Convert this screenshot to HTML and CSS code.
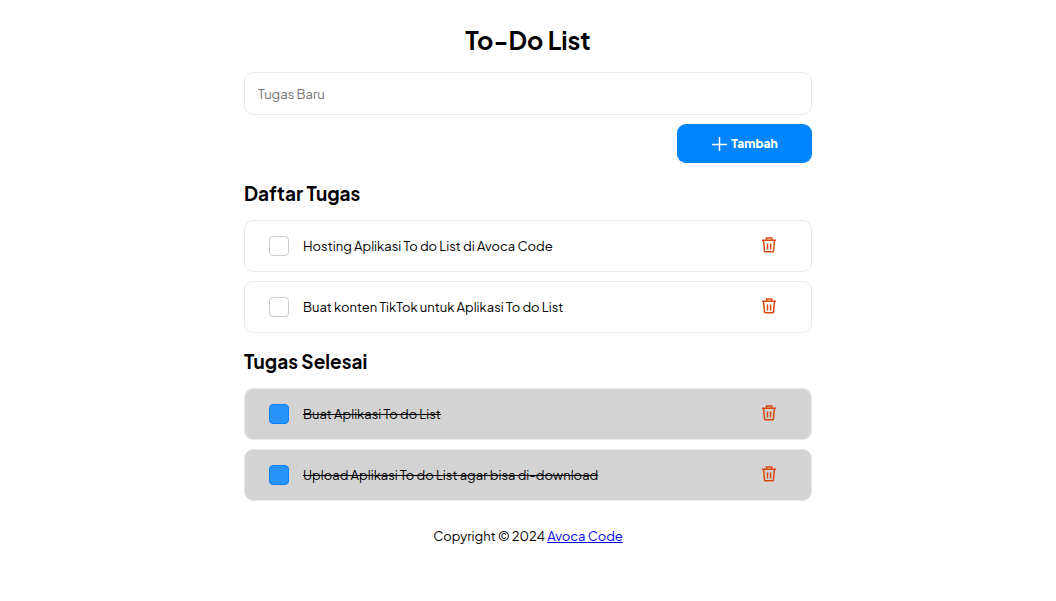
FILE: index.html
```html
<!DOCTYPE html>
<html lang="id">
<head>
  <meta charset="UTF-8" />
  <meta name="viewport" content="width=device-width, initial-scale=1.0" />
  <title>To-Do List</title>
  <link rel="stylesheet" href="styles.css">
</head>
<body>
  <svg class="sprite" aria-hidden="true">
    <symbol id="icon-trash" viewBox="0 0 16 16">
      <path d="M1 3.3h14M5.5 3V.9h5.2V3M2.6 4l.9 9.6q.1 1.2 1.2 1.2h6.6q1.1 0 1.2-1.2l.9-9.6M6.5 6.5v6M9.6 6.5v6" />
    </symbol>
  </svg>

  <div class="container">
    <h1>To-Do List</h1>

    <form class="task-form" id="taskForm">
      <input class="task-input" id="newTask" type="text" placeholder="Tugas Baru" aria-label="Tugas Baru" />
      <button class="add-button" type="submit">
        <svg class="add-icon" viewBox="0 0 16 16" aria-hidden="true"><path d="M8.5 1v14M1 8.5h15" /></svg>
        Tambah
      </button>
    </form>

    <h2>Daftar Tugas</h2>
    <ul class="task-list" id="todoList">
      <li class="task">
        <input class="task-check" id="task1" type="checkbox" />
        <label class="task-name" for="task1">Hosting Aplikasi To do List di Avoca Code</label>
        <button class="delete-button" type="button" aria-label="Hapus"><svg><use href="#icon-trash" /></svg></button>
      </li>
      <li class="task">
        <input class="task-check" id="task2" type="checkbox" />
        <label class="task-name" for="task2">Buat konten TikTok untuk Aplikasi To do List</label>
        <button class="delete-button" type="button" aria-label="Hapus"><svg><use href="#icon-trash" /></svg></button>
      </li>
    </ul>

    <h2>Tugas Selesai</h2>
    <ul class="task-list" id="doneList">
      <li class="task done">
        <input class="task-check" id="task3" type="checkbox" checked />
        <label class="task-name" for="task3">Buat Aplikasi To do List</label>
        <button class="delete-button" type="button" aria-label="Hapus"><svg><use href="#icon-trash" /></svg></button>
      </li>
      <li class="task done">
        <input class="task-check" id="task4" type="checkbox" checked />
        <label class="task-name" for="task4">Upload Aplikasi To do List agar bisa di-download</label>
        <button class="delete-button" type="button" aria-label="Hapus"><svg><use href="#icon-trash" /></svg></button>
      </li>
    </ul>

    <footer>Copyright © 2024 <a href="#">Avoca Code</a></footer>
  </div>
</body>
</html>
```
FILE: styles.css
```css
* {
  box-sizing: border-box;
}
body {
  margin: 0;
  font-family: "Plus Jakarta Sans", Inter, sans-serif;
  font-size: 13px;
  line-height: 18px;
  color: #000;
  background: #fff;
}
.sprite {
  display: none;
}
.container {
  max-width: 600px;
  margin: 0 auto;
  padding: 24px 16px;
}
h1 {
  margin: 0 0 16px;
  font-size: 25px;
  line-height: 32px;
  font-weight: 700;
  text-align: center;
}
h2 {
  margin: 16px 0 15px;
  font-size: 19px;
  line-height: 24px;
  font-weight: 700;
}
input, button {
  font-family: inherit;
  font-size: 13px;
}
.task-form {
  display: flex;
  flex-direction: column;
  align-items: flex-end;
  gap: 9px;
  padding-bottom: 2px;
}
.task-input {
  width: 100%;
  height: 43px;
  padding: 0 13px;
  border: 1px solid #e8eaed;
  border-radius: 9px;
}
.task-input::placeholder {
  color: #757575;
}
.add-button {
  display: flex;
  align-items: center;
  justify-content: center;
  gap: 4px;
  width: 135px;
  height: 39px;
  border: 0;
  border-radius: 9px;
  background: #0085ff;
  color: #fff;
  font-size: 12px;
  font-weight: 800;
  cursor: pointer;
}
.add-icon {
  width: 16px;
  height: 16px;
  fill: none;
  stroke: #fff;
  stroke-width: 1.5;
}
.task-list {
  display: flex;
  flex-direction: column;
  gap: 9px;
  margin: 0;
  padding: 0;
  list-style: none;
}
.task {
  display: flex;
  align-items: center;
  gap: 14px;
  min-height: 52px;
  padding: 8px 34px 8px 24px;
  border: 1px solid #e8eaed;
  border-radius: 9px;
}
.task-check {
  appearance: none;
  width: 20px;
  height: 20px;
  margin: 0;
  border: 1px solid #ccc;
  border-radius: 4px;
  background: #fff;
}
.task-check:checked {
  border-color: #0d83f8;
  background: #2792f8;
}
.task-name {
  flex: 1;
}
.delete-button {
  padding: 0 0 2px;
  border: 0;
  background: none;
  cursor: pointer;
}
.delete-button svg {
  display: block;
  width: 16px;
  height: 16px;
  fill: none;
  stroke: #d9480f;
  stroke-width: 1.5;
}
.done {
  background: #d3d3d3;
}
.done .task-name {
  text-decoration: line-through;
}
footer {
  margin-top: 26px;
  text-align: center;
}
footer a {
  color: #0000ee;
}
```
